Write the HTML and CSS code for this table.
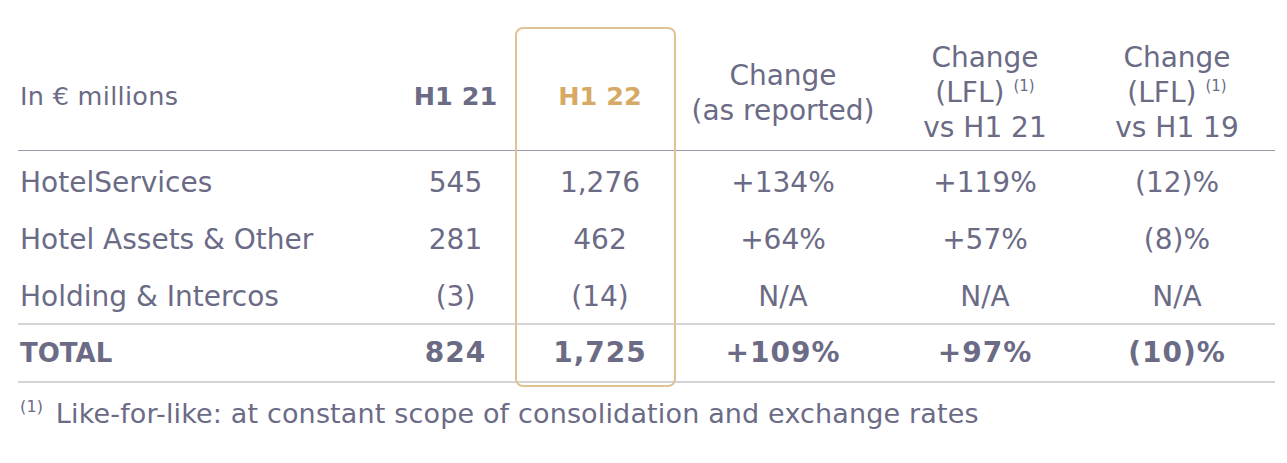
FILE: index.html
```html
<!DOCTYPE html>
<html lang="en">
<head>
<meta charset="utf-8">
<title>Revenue by business</title>
<link rel="stylesheet" href="styles.css">
</head>
<body>
<div class="wrap">
  <div class="highlight"></div>
  <table class="fin">
    <colgroup>
      <col class="c-label"><col class="c-h21"><col class="c-h22"><col class="c-rep"><col class="c-lfl21"><col class="c-lfl19">
    </colgroup>
    <thead>
      <tr>
        <th class="label">In € millions</th>
        <th class="num strong">H1 21</th>
        <th class="num strong gold hl">H1 22</th>
        <th class="num">Change<br>(as reported)</th>
        <th class="num">Change<br>(LFL) <sup>(1)</sup><br>vs H1 21</th>
        <th class="num">Change<br>(LFL) <sup>(1)</sup><br>vs H1 19</th>
      </tr>
    </thead>
    <tbody>
      <tr class="first">
        <td class="label">HotelServices</td>
        <td class="num">545</td>
        <td class="num hl">1,276</td>
        <td class="num">+134%</td>
        <td class="num">+119%</td>
        <td class="num">(12)%</td>
      </tr>
      <tr>
        <td class="label">Hotel Assets &amp; Other</td>
        <td class="num">281</td>
        <td class="num hl">462</td>
        <td class="num">+64%</td>
        <td class="num">+57%</td>
        <td class="num">(8)%</td>
      </tr>
      <tr class="last">
        <td class="label">Holding &amp; Intercos</td>
        <td class="num">(3)</td>
        <td class="num hl">(14)</td>
        <td class="num">N/A</td>
        <td class="num">N/A</td>
        <td class="num">N/A</td>
      </tr>
      <tr class="total">
        <td class="label">TOTAL</td>
        <td class="num">824</td>
        <td class="num hl">1,725</td>
        <td class="num">+109%</td>
        <td class="num">+97%</td>
        <td class="num">(10)%</td>
      </tr>
    </tbody>
  </table>
  <p class="note"><sup>(1)</sup> Like-for-like: at constant scope of consolidation and exchange rates</p>
</div>
</body>
</html>
```

FILE: styles.css
```css
html, body {
  margin: 0;
  padding: 0;
  background: #ffffff;
}

body {
  font-family: "DejaVu Sans", Verdana, sans-serif;
  color: #6b6b86;
}

.wrap {
  position: relative;
  padding: 40px 0 0 18px;
  width: 1257px;
}

.highlight {
  position: absolute;
  left: 515px;
  top: 27px;
  width: 157px;
  height: 356px;
  border: 2px solid #e0c393;
  border-radius: 8px;
  pointer-events: none;
}

.fin {
  border-collapse: collapse;
  table-layout: fixed;
  width: 1257px;
  font-size: 28px;
}

.c-label { width: 377px; }
.c-h21 { width: 121px; }
.c-h22 { width: 159px; }
.c-rep { width: 216px; }
.c-lfl21 { width: 188px; }
.c-lfl19 { width: 196px; }

.fin th {
  font-weight: normal;
  line-height: 35px;
  padding: 0 0 5px 0;
  vertical-align: middle;
  border-bottom: 1px solid #9a9aa6;
}

.fin th.label {
  text-align: left;
  font-size: 25.5px;
  letter-spacing: 0.3px;
  padding: 8px 0 5px 2px;
}

.fin th.strong {
  font-weight: bold;
  font-size: 25.5px;
  padding-top: 8px;
}

.fin th.gold {
  color: #d6a964;
}

.fin sup {
  font-size: 15px;
  vertical-align: 11px;
  line-height: 0;
}

.fin td {
  height: 57px;
  padding: 0;
  vertical-align: middle;
  line-height: 32px;
}

.fin tr.first td {
  height: 56px;
  padding-top: 4px;
}

.fin td.label {
  text-align: left;
  padding-left: 2px;
}

.num {
  text-align: center;
}

.fin .hl {
  padding-left: 9px;
}

.fin tr.last td {
  height: 53px;
  padding-top: 2px;
  border-bottom: 2px solid #d3d3d8;
}

.fin tr.total td {
  font-weight: bold;
  letter-spacing: 1px;
  border-bottom: 2px solid #d3d3d8;
  height: 56px;
}

.fin tr.total td.label {
  font-size: 26px;
  letter-spacing: 0;
}

.note {
  margin: 15px 0 0 2px;
  font-size: 27px;
  letter-spacing: 0.15px;
}

.note sup {
  font-size: 16px;
  vertical-align: 11px;
  line-height: 0;
  margin-right: 4px;
}
```
